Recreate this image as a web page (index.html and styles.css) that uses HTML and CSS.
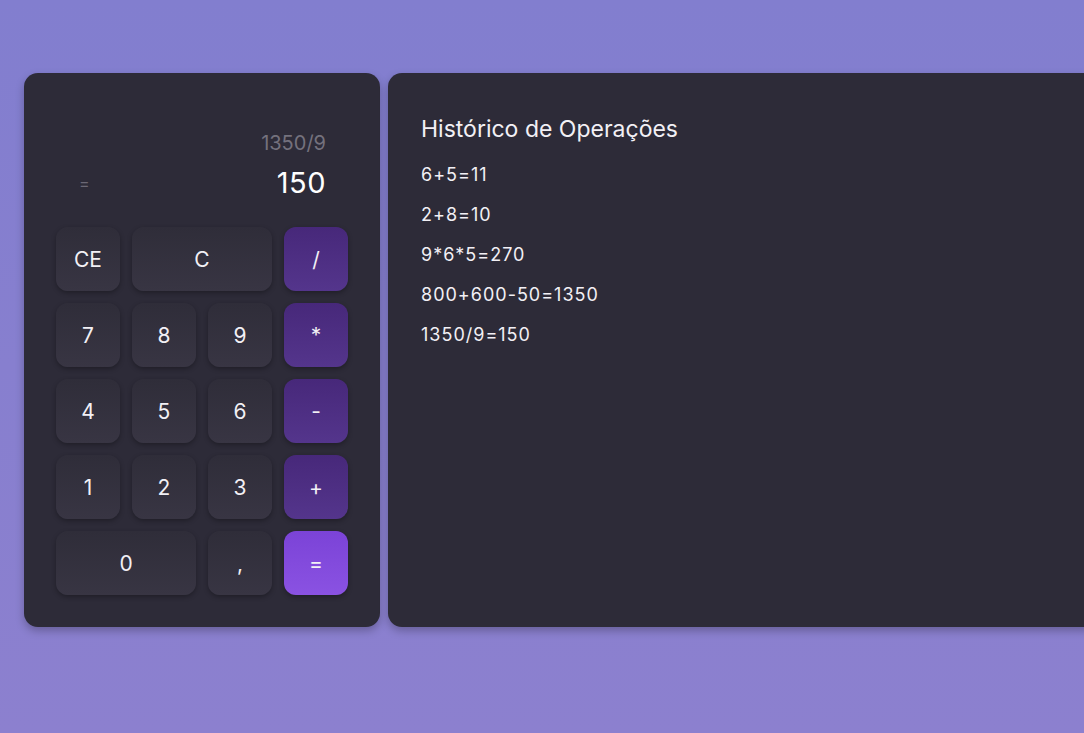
FILE: index.html
```html
<!DOCTYPE html>
<html lang="pt-BR">
<head>
<meta charset="utf-8">
<title>Calculadora</title>
<link rel="stylesheet" href="styles.css">
</head>
<body>
<main class="app">
  <section class="calc">
    <div class="display">
      <div class="expr">1350/9</div>
      <div class="result-row">
        <span class="eq">=</span>
        <span class="result">150</span>
      </div>
    </div>
    <button class="key">CE</button>
    <button class="key wide">C</button>
    <button class="key op">/</button>
    <button class="key">7</button>
    <button class="key">8</button>
    <button class="key">9</button>
    <button class="key op">*</button>
    <button class="key">4</button>
    <button class="key">5</button>
    <button class="key">6</button>
    <button class="key op">-</button>
    <button class="key">1</button>
    <button class="key">2</button>
    <button class="key">3</button>
    <button class="key op">+</button>
    <button class="key wide">0</button>
    <button class="key">,</button>
    <button class="key equals">=</button>
  </section>
  <section class="history">
    <h2 class="history-title">Histórico de Operações</h2>
    <ul class="history-list">
      <li>6+5=11</li>
      <li>2+8=10</li>
      <li>9*6*5=270</li>
      <li>800+600-50=1350</li>
      <li>1350/9=150</li>
    </ul>
  </section>
</main>
</body>
</html>
```
FILE: styles.css
```css
* { box-sizing: border-box; }
html, body { height: 100%; }
body {
  margin: 0;
  overflow: hidden;
  background: linear-gradient(180deg, #827ecf 0%, #8c80cf 100%);
  font-family: Inter, "Noto Sans", sans-serif;
  color: #f2f0f5;
}
.app {
  display: flex;
  gap: 8px;
  padding: 73px 0 0 24px;
  width: 1400px;
}
.calc {
  width: 356px;
  height: 554px;
  flex: none;
  background: #2d2b38;
  border-radius: 14px;
  padding: 32px;
  display: grid;
  grid-template-columns: repeat(4, 64px);
  grid-auto-rows: 64px;
  grid-template-rows: 110px;
  gap: 12px;
  box-shadow: 0 4px 8px rgba(0,0,0,0.25);
}
.display {
  grid-column: 1 / -1;
  padding: 26px 22px 16px 22px;
  display: flex;
  flex-direction: column;
  gap: 12px;
}
.expr {
  text-align: right;
  font-size: 20px;
  line-height: 24px;
  color: #74717d;
}
.result-row {
  display: flex;
  justify-content: space-between;
  align-items: center;
  height: 32px;
}
.eq {
  font-size: 16px;
  color: #6b6875;
  padding-left: 1px;
}
.result {
  font-size: 29px;
  line-height: 32px;
  letter-spacing: 0.5px;
  color: #ffffff;
}
.key {
  border: none;
  border-radius: 12px;
  font-family: inherit;
  font-size: 21px;
  color: #f2f0f5;
  background: linear-gradient(180deg, #2f2d39 0%, #383543 100%);
  box-shadow: 0 2px 5px rgba(0,0,0,0.3);
  padding: 0;
  cursor: pointer;
}
.key.wide { grid-column: span 2; }
.key.op {
  background: linear-gradient(180deg, #47287a 0%, #54358c 100%);
}
.key.equals {
  background: linear-gradient(180deg, #7b43d7 0%, #8a52e2 100%);
}
.history {
  width: 1000px;
  height: 554px;
  flex: none;
  background: #2d2b38;
  border-radius: 14px;
  padding: 42px 33px;
  box-shadow: 0 4px 8px rgba(0,0,0,0.25);
}
.history-title {
  margin: 0 0 12px;
  font-weight: 400;
  font-size: 23px;
  line-height: 28px;
  color: #f2f0f5;
}
.history-list {
  list-style: none;
  margin: 0;
  padding: 0;
}
.history-list li {
  font-size: 18px;
  line-height: 40px;
  letter-spacing: 1px;
  color: #f2f0f5;
}
```
